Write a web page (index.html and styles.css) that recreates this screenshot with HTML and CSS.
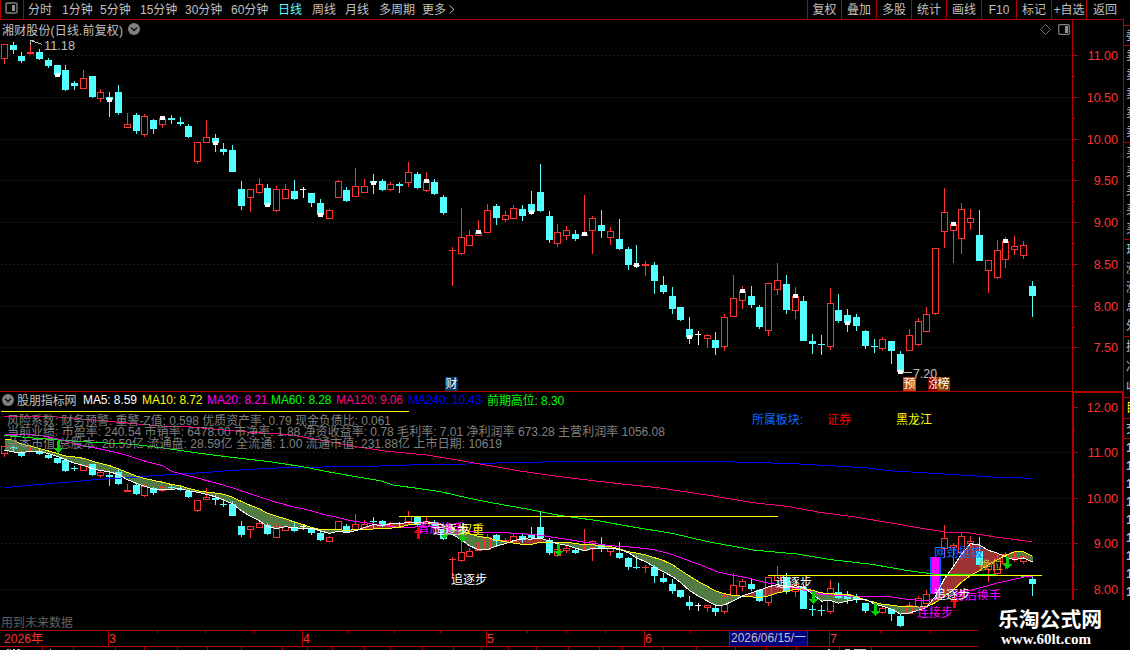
FILE: index.html
```
<!DOCTYPE html>
<html lang="zh-CN">
<head>
    <meta charset="UTF-8">
    <title>湘财股份 日线</title>
    <link rel="stylesheet" href="styles.css">
</head>
<body>
    <div class="toolbar">
        <div class="layout-btn">
            <svg width="13" height="12" viewBox="0 0 13 12"><rect x="1" y="1" width="11" height="10" rx="1" fill="none" stroke="#808080" stroke-width="1.4"/><rect x="7" y="3" width="3" height="6" fill="#909090"/></svg>
        </div>
        <div class="periods">
            <span>分时</span><span>1分钟</span><span>5分钟</span><span>15分钟</span><span>30分钟</span><span>60分钟</span><span class="active">日线</span><span>周线</span><span>月线</span><span>多周期</span>
            <span>更多 <svg width="6" height="9" viewBox="0 0 6 9"><path d="M0.5 0.5L5 4.5L0.5 8.5" fill="none" stroke="#c0c0c0"/></svg></span>
        </div>
        <div class="tools">
            <span>复权</span><span>叠加</span><span>多股</span><span>统计</span><span>画线</span><span>F10</span><span>标记</span><span>+自选</span><span>返回</span>
        </div>
    </div>

    <div class="main">
        <div class="charts">
            <div class="panel price-panel">
                <svg class="plot" id="pricePlot" width="1123" height="371" viewBox="0 20 1123 371"></svg>
                <div class="caption">
                    <span class="stock-name">湘财股份(日线.前复权)</span>
                    <svg width="12" height="12" viewBox="0 0 12 12"><circle cx="6" cy="6" r="6" fill="#808080"/><path d="M3 4.5L6 7.5L9 4.5" fill="none" stroke="#111" stroke-width="1.4"/></svg>
                    <div class="caption-icons">
                        <svg width="11" height="11" viewBox="0 0 11 11"><path d="M5.5 0.5L10.5 5.5L5.5 10.5L0.5 5.5Z" fill="none" stroke="#707070"/></svg>
                        <svg width="12" height="11" viewBox="0 0 12 11"><rect x="0.7" y="0.7" width="10.6" height="9.6" rx="1" fill="none" stroke="#808080" stroke-width="1.2"/><rect x="7" y="2" width="3" height="7" fill="#909090"/></svg>
                    </div>
                </div>
            </div>

            <div class="panel ind-panel">
                <svg class="plot" id="indPlot" width="1123" height="259" viewBox="0 391 1123 259"></svg>
                <div class="ind-caption">
                    <svg width="12" height="12" viewBox="0 0 12 12"><circle cx="6" cy="6" r="6" fill="#808080"/><path d="M3 4.5L6 7.5L9 4.5" fill="none" stroke="#111" stroke-width="1.4"/></svg>
                    <span class="gray">股朋指标网</span>
                    <span class="white">MA5: 8.59</span>
                    <span class="yellow">MA10: 8.72</span>
                    <span class="magenta">MA20: 8.21</span>
                    <span class="green">MA60: 8.28</span>
                    <span class="pink">MA120: 9.06</span>
                    <span class="blue">MA240: 10.43</span>
                    <span class="green">前期高位: 8.30</span>
                </div>
            </div>
        </div>

        <div class="strip">
            <div class="box box-1"><b>委</b></div>
            <div class="box box-5"><b>卖</b><b>卖</b><b>卖</b><b>卖</b><b>卖</b></div>
            <div class="box box-5"><b>买</b><b>买</b><b>买</b><b>买</b><b>买</b></div>
            <div class="box box-5"><b>现</b><b>涨</b><b>涨</b><b>总</b><b>外</b></div>
            <div class="box box-3"><b>换</b><b>净</b><b>收</b></div>
            <div class="box box-1 tab"><b>目</b></div>
            <div class="box box-1"><b>交</b></div>
            <div class="box ticks"><b>1</b><b>1</b><b>1</b><b>1</b><b>1</b><b>1</b><b>1</b><b>1</b><b>1</b></div>
        </div>
    </div>

    <div class="brand">
        <div class="brand-name">乐淘公式网</div>
        <div class="brand-url">www.60lt.com</div>
    </div>

    <script src="chart.js"></script>
</body>
</html>
```
FILE: styles.css
```
* {
    box-sizing: border-box;
}
body {
    margin: 0;
    width: 1130px;
    height: 650px;
    overflow: hidden;
    background: #000;
    color: #c0c0c0;
    font-family: "Liberation Sans", "Noto Sans CJK SC", sans-serif;
    font-size: 12px;
}
svg {
    display: block;
    flex: none;
}

/* top toolbar */
.toolbar {
    display: flex;
    height: 20px;
    width: 1124px;
    border-bottom: 1px solid #b00000;
    line-height: 20px;
    white-space: nowrap;
}
.layout-btn {
    width: 24px;
    padding: 2px 0 0 4px;
    border-left: 1px solid #b00000;
    border-right: 1px solid #b00000;
}
.periods {
    display: grid;
    grid-template-columns: 34px 38px 40px 45px 46px 47px 34px 33px 34px 43px 40px;
    padding-left: 4px;
}
.periods svg {
    display: inline-block;
}
.periods .active {
    color: #54ffff;
}
.tools {
    display: flex;
    margin-left: auto;
}
.tools span {
    width: 35px;
    border-left: 1px solid #b00000;
    text-align: center;
}
.tools span:first-child {
    width: 34px;
}
.tools span:last-child {
    width: 38px;
    padding-right: 1px;
}

.main {
    display: flex;
}
.charts {
    width: 1123px;
}
.panel {
    position: relative;
}
.price-panel {
    height: 371px;
}
.ind-panel {
    height: 259px;
}
.plot {
    position: absolute;
    left: 0;
    top: 0;
    shape-rendering: crispEdges;
}
.caption,
.ind-caption {
    position: relative;
    display: flex;
    align-items: center;
    white-space: nowrap;
}
.caption {
    height: 18px;
    padding: 0 53px 0 2px;
    gap: 5px;
}
.stock-name {
    width: 121px;
    letter-spacing: 0.15px;
}
.caption-icons {
    display: flex;
    gap: 7px;
    margin-left: auto;
}
.ind-caption {
    display: grid;
    grid-template-columns: 15px 66px 59px 65px 64px 65px 72px 79px 80px;
    height: 17px;
    padding-left: 2px;
}
.ind-caption span {
    letter-spacing: -0.1px;
}

.gray { color: #c0c0c0; }
.white { color: #fff; }
.yellow { color: #ff0; }
.magenta { color: #f0f; }
.green { color: #0f0; }
.pink { color: #ff0080; }
.blue { color: #00f; }

.axis-text {
    fill: #ff3232;
    font-size: 12.5px;
}
.badge-text {
    fill: #fff;
    font-size: 12px;
}

/* quote column cut off by the window edge */
.strip {
    width: 7px;
    height: 630px;
    padding-top: 5px;
    border-left: 1px solid #b00000;
    overflow: hidden;
}
.box {
    display: flex;
    flex-direction: column;
    justify-content: space-around;
    border-top: 1px solid #b00000;
    padding-left: 2px;
    overflow: hidden;
    line-height: 18px;
}
.box b {
    font-weight: normal;
}
.box-1 { height: 20px; }
.box-5 { height: 97px; }
.box-3 { height: 61px; }
.tab { color: #ff0; height: 21px; }
.ticks {
    height: 163px;
}
.ticks b {
    font-weight: bold;
    font-size: 13px;
}

.brand {
    position: absolute;
    left: 978px;
    top: 600px;
    width: 152px;
    height: 50px;
    padding: 7px 0 0 20px;
    background: #000;
    color: #fff;
    font-weight: bold;
    white-space: nowrap;
}
.brand-name {
    font-family: "Noto Sans CJK SC", sans-serif;
    font-size: 20.8px;
    line-height: 22px;
}
.brand-url {
    padding: 1px 0 0 3px;
    font-family: "Liberation Serif", serif;
    font-size: 15px;
    line-height: 18px;
}
```
FILE: chart.js
```
// r = up (hollow), c = down (filled), w = flat; then high, body top, body bottom, low, flag
const bars = [
    ['r',44,44,59,64],['c',42,45,50,54],['c',52,56,61,63],['r',43,52,54,55],['c',49,52,59,60],['c',58,60,66,68],
    ['c',65,65,75,77,73],['c',65,70,90,91],['c',81,83,86,90],['r',70,78,89,89],['c',76,76,97,98],['r',89,92,99,102],
    ['c',92,97,100,117,98],['c',85,92,113,115],['r',113,124,128,128],['c',113,115,131,134],['r',114,116,135,137],
    ['c',119,120,129,134],['r',116,118,125,128,116],['c',115,118,120,124],['c',117,122,124,126],['c',124,126,137,138],
    ['r',142,142,162,164],['r',120,137,143,143],['c',134,138,143,152,141],['c',143,149,152,155],['c',145,150,172,172],
    ['c',181,189,206,210],['r',189,189,198,212],['r',178,184,193,194],['c',184,188,205,207,203],['r',186,189,211,212],
    ['r',184,189,199,199],['c',180,191,199,200],['w',187,189,190,198],['c',193,193,203,207],['c',199,203,215,217,213],
    ['r',209,210,219,219],['r',180,181,198,198],['c',187,190,201,202],['r',168,186,197,197],['r',179,186,193,193],
    ['c',174,181,183,194,181],['c',179,181,190,191],['r',182,184,190,191],['c',182,184,186,193],['r',162,172,183,187],
    ['c',172,174,188,189],['r',172,181,191,192,179],['c',179,182,194,195],['c',195,197,213,215],['r',247,250,251,286],
    ['r',208,237,254,255],['r',230,235,246,246],['r',220,232,236,236,230],['r',204,210,233,233],['c',204,206,218,225],
    ['r',211,215,220,222],['r',205,208,219,219],['c',205,209,216,221],['c',191,204,212,215,210],['c',164,192,211,212],
    ['c',211,216,240,243],['r',224,232,244,247],['r',226,230,236,240],['c',230,234,239,241],['r',195,234,236,236,232],
    ['r',216,218,231,254],['c',210,225,231,238],['r',227,231,238,245],['c',219,239,249,250],['c',247,249,265,270],
    ['c',245,265,266,268,263],['r',261,264,266,276],['c',262,265,281,294],['c',276,285,292,294],['c',287,296,309,314],
    ['c',307,307,320,321],['c',317,329,337,344,335],['w',331,334,335,345],['r',334,335,339,348],['c',332,340,348,355],
    ['r',314,317,347,351],['r',275,298,317,317],['r',286,291,301,309,289],['c',286,296,305,308],['c',305,307,327,329],
    ['r',283,283,331,336],['r',263,280,290,295],['c',275,284,310,314],['r',287,296,311,319,294],['c',296,301,341,341],
    ['c',334,341,344,354],['c',335,344,345,355],['r',288,303,347,350],['c',294,310,321,323],['c',309,315,323,332,321],
    ['c',314,317,326,331],['c',330,331,346,349],['c',339,346,347,353],['r',337,339,349,351],['c',341,341,351,364],
    ['c',351,354,372,374,370],['r',329,335,351,351],['r',318,321,345,346],['r',307,314,332,332],['r',248,248,314,315],
    ['r',188,212,232,248],['r',221,224,231,263,222],['r',203,209,239,254],['r',209,218,223,230],['c',210,235,261,261],
    ['r',260,260,271,293],['r',240,250,278,279],['r',237,241,260,268,239],['r',236,246,250,255],['r',241,245,256,259],
    ['c',281,286,296,317]
];

const RED = '#ff3232', CYAN = '#54ffff', LINE = '#b00000';
const price = document.getElementById('pricePlot');
const ind = document.getElementById('indPlot');
const barX = i => Math.floor(4.3 + i * 8.786);
const toInd = y => 452.5 + (y - 55.5) * 0.547;

function add(svg, tag, attrs, text) {
    const el = document.createElementNS('http://www.w3.org/2000/svg', tag);
    for (const k in attrs) el.setAttribute(k, attrs[k]);
    if (text) el.textContent = text;
    svg.appendChild(el);
    return el;
}
function rect(svg, x, y, w, h, fill) {
    add(svg, 'rect', { x, y, width: w, height: h, fill });
}
function line(svg, pts, color) {
    add(svg, 'polyline', { points: pts.map(p => p.join(',')).join(' '), fill: 'none', stroke: color });
}
function label(svg, x, y, text, fill, width, size) {
    const a = { x, y, fill, 'font-size': size || 12 };
    if (width) { a.textLength = width; a.lengthAdjust = 'spacingAndGlyphs'; }
    add(svg, 'text', a, text);
}
function grid(svg, ys) {
    ys.forEach(y => add(svg, 'line', { x1: 1, x2: 1072, y1: y + 0.5, y2: y + 0.5, stroke: '#a00000', 'stroke-dasharray': '1 3' }));
}
function candle(svg, x, type, hi, top, bot, lo) {
    const color = type === 'r' ? RED : type === 'c' ? CYAN : '#fff';
    if (top > hi) rect(svg, x, hi, 1, top - hi, color);
    if (lo > bot) rect(svg, x, bot, 1, lo - bot, color);
    if (type === 'w') {
        rect(svg, x - 3, top, 6, 1, color);
        rect(svg, x, top, 1, 2, color);
    } else if (type === 'c' || bot - top < 3) {
        rect(svg, x - 3, top, 7, Math.max(1, bot - top), color);
    } else {
        add(svg, 'rect', { x: x - 2.5, y: top + 0.5, width: 6, height: bot - top - 1, fill: 'none', stroke: color });
    }
}

// ---- price chart ----
grid(price, [55, 97, 139, 180, 222, 264, 306, 347]);
bars.forEach((b, i) => {
    candle(price, barX(i), b[0], b[1], b[2], b[3], b[4]);
    if (b[5]) rect(price, barX(i) - 2, b[5], 5, 4, '#fff');
});
rect(price, 1072, 20, 1, 371, LINE);
[[55, '11.00'], [97, '10.50'], [139, '10.00'], [180, '9.50'], [222, '9.00'], [264, '8.50'], [306, '8.00'], [347, '7.50']].forEach(([y, t], i) => {
    rect(price, 1073, y, 5, 1, LINE);
    if (i < 7) rect(price, 1073, y + 21, 2, 1, LINE);
    add(price, 'text', { x: 1118, y: y + 5, 'text-anchor': 'end', class: 'axis-text' }, t);
});
line(price, [[30.5, 45], [30.5, 40.5], [34, 40.5]], '#c0c0c0');
line(price, [[31, 40.5], [42, 44.5]], '#c0c0c0');
label(price, 44, 50, '11.18', '#c0c0c0', 31, 12.5);
line(price, [[902, 372.5], [912, 372.5]], '#c0c0c0');
label(price, 913, 378, '7.20', '#c0c0c0', 24, 12.5);
[[445, '财', '#003866'], [903, '预', '#b84a10'], [928, '涨', '#800000'], [937, '榜', '#804000']].forEach(([x, t, bg]) => {
    rect(price, x, 377, 13, 14, bg);
    add(price, 'text', { x: x + 0.5, y: 388, class: 'badge-text' }, t);
});

// ---- indicator chart ----
grid(ind, [452, 498, 543, 589]);

const closes = bars.map(b => toInd(b[0] === 'c' ? b[3] : b[2]));
function ma(n, seed) {
    return closes.map((c, i) => {
        const y = i < n - 1 ? seed[i] : closes.slice(i - n + 1, i + 1).reduce((a, v) => a + v, 0) / n;
        return [barX(i) + 0.5, y];
    });
}
const ma5 = ma(5, [450, 452, 452.5, 451.5]);
const ma10 = ma(10, [439, 440.5, 444, 446, 448.5, 451, 453.5, 456, 457]);
const ma20 = ma(20, [434, 434, 434, 434.5, 435.5, 437, 439, 441, 443.5, 446, 447.5, 449, 451, 453, 455.5, 458.5, 461, 463.5, 465.5]);

// band between MA5 and MA10, split where they cross
for (let i = 1; i < bars.length; i++) {
    const [x0, a0] = ma5[i - 1], [x1, a1] = ma5[i], b0 = ma10[i - 1][1], b1 = ma10[i][1];
    const d0 = a0 - b0, d1 = a1 - b1;
    const fill = d => d > 0 ? '#527a43' : '#9c3232';
    const poly = (pts, d) => add(ind, 'polygon', { points: pts.join(' '), fill: fill(d) });
    if (d0 * d1 < 0) {
        const t = d0 / (d0 - d1), xc = x0 + (x1 - x0) * t, yc = a0 + (a1 - a0) * t;
        poly([x0, a0, xc, yc, x0, b0], d0);
        poly([x1, a1, xc, yc, x1, b1], d1);
    } else {
        poly([x0, a0, x1, a1, x1, b1, x0, b0], d0 + d1);
    }
}

bars.forEach((b, i) => {
    if (i === 106) return;
    const [hi, top, bot, lo] = b.slice(1, 5).map(y => Math.round(toInd(y)));
    candle(ind, barX(i), b[0], hi, top, bot, lo);
});
rect(ind, 930, 557, 11, 37, '#0060ff');
rect(ind, 932, 557, 7, 37, '#ff00ff');

line(ind, [[4,487.7],[33,485],[67,482.3],[100,479.3],[133,477.3],[167,474.7],[207,472.3],[233,470.3],[283,467.7],[340,466.7],[380,466],[420,464.7],[467,464],[518,462.3],[597,461.3],[693,461.3],[753,462.3],[807,464.3],[867,468],[893,471],[933,473.3],[993,477],[1032,478.3]], '#0000ff');
line(ind, [[4,416.5],[53,416.7],[97,420.3],[160,426],[187,426.7],[250,432.3],[287,434.3],[307,437.7],[333,442.3],[360,447.3],[387,451.3],[427,455],[467,461.7],[520,471],[560,476.7],[613,483],[660,488],[707,495],[753,502.7],[787,506.3],[820,512.3],[853,516.7],[887,522.3],[920,528],[947,532.3],[970,533],[997,537.3],[1032,541.7]], '#ff0080');
line(ind, [[4,435.5],[33,438],[67,440.7],[100,442.7],[133,444.3],[167,448.5],[200,453.3],[233,457.5],[267,461.3],[300,466.3],[333,472.7],[380,480.7],[393,485],[440,491.5],[470,498.5],[493,503],[527,509],[560,515.5],[600,521],[633,527],[673,533.5],[707,541.5],[740,547.5],[753,550],[797,554],[830,559.5],[873,564.5],[907,570.5],[933,574],[983,574.5],[1033,576.5]], '#00ff00');
line(ind, ma20, '#ff00ff');
line(ind, ma10, '#ffff00');
line(ind, ma5, '#ffffff');

rect(ind, 1, 411, 408, 1, '#ffff00');
rect(ind, 399, 516, 379, 1, '#ffff00');
rect(ind, 768, 575, 274, 1, '#ffff00');

// signal arrows
[[58, 441], [444, 527], [462, 530], [558, 544], [813, 592], [875, 604], [1007, 557]].forEach(([x, y]) => {
    add(ind, 'path', { d: `M${x - 1} ${y}h3v7h3l-4.5 5l-4.5 -5h3z`, fill: '#00d000' });
});
[[418, 527], [954, 596]].forEach(([x, y]) => {
    add(ind, 'path', { d: `M${x - 1} ${y + 12}h3v-6h3l-4.5 -6l-4.5 6h3z`, fill: '#ff0000' });
});

label(ind, 7, 425, '风险系数: 财务预警: 重警-Z值: 0.598 优质资产率: 0.79 现金负债比: 0.061', '#808080', 384);
label(ind, 7, 436, '当前业绩: 市盈率: 240.54 市销率: 6478.00 市净率: 1.88 净资收益率: 0.78 毛利率: 7.01 净利润率 673.28 主营利润率 1056.08', '#808080', 658);
label(ind, 7, 448, '总本市值 总股本: 28.59亿 流通盘: 28.59亿 全流通: 1.00 流通市值: 231.88亿 上市日期: 10619', '#808080', 495);
label(ind, 752, 424, '所属板块:', '#0a6cff', 51);
label(ind, 827, 424, '证券', '#ff0000', 24);
label(ind, 896, 424, '黑龙江', '#ffff00', 36);
label(ind, 418, 533, '背后换手', '#ff00ff', 46);
label(ind, 460, 534, '权重', '#ffff00', 24);
label(ind, 433, 534, '追逐步', '#ffffff', 36);
label(ind, 451, 584, '追逐步', '#ffffff', 36);
label(ind, 776, 587, '追逐步', '#ffffff', 36);
label(ind, 934, 557, '网劲挺拔', '#0a6cff', 49);
label(ind, 979, 570, '换位', '#c8b432', 24);
label(ind, 953, 600, '背后换手', '#ff00ff', 48);
label(ind, 934, 599, '追逐步', '#ffffff', 36);
label(ind, 917, 617, '连接步', '#ff00ff', 36);
label(ind, 1, 627, '用到未来数据', '#606060', 72);

// frame and value axis
rect(ind, 0, 391, 1073, 1, LINE);
rect(ind, 1072, 391, 51, 2, LINE);
rect(ind, 1072, 391, 2, 209, LINE);
rect(ind, 1122, 391, 1, 209, LINE);
[[407, '12.00'], [452, '11.00'], [498, '10.00'], [543, '9.00'], [589, '8.00']].forEach(([y, t], i) => {
    rect(ind, 1074, y, 4, 1, LINE);
    if (i < 4) rect(ind, 1074, y + 23, 1, 1, LINE);
    add(ind, 'text', { x: 1118, y: y + 5, 'text-anchor': 'end', class: 'axis-text' }, t);
});

// time axis
rect(ind, 0, 630, 978, 1, LINE);
rect(ind, 0, 646, 978, 1, LINE);
[108, 302, 486, 644, 829].forEach(x => rect(ind, x, 630, 1, 16, LINE));
[157, 205, 254, 348, 394, 440, 527, 566, 605, 690, 880, 930].forEach(x => rect(ind, x, 631, 1, 2, LINE));
[42, 73, 115, 144, 177, 207, 241, 282, 307, 332, 364, 390, 422, 453, 481, 508, 536, 568, 599, 622, 663, 696, 735, 766, 796, 839, 871].forEach(x => rect(ind, x, 647, 1, 3, LINE));
[[4, '2026年', 39], [109, '3'], [303, '4'], [487, '5'], [645, '6'], [830, '7']].forEach(([x, t, w]) => label(ind, x, 643, t, RED, w, 12.5));
rect(ind, 729, 631, 79, 15, LINE);
rect(ind, 730, 631, 77, 15, '#000080');
label(ind, 731, 642, '2026/06/15/一', '#c0c0c0', 75, 12.5);
[[7, 2], [10, 1], [13, 2], [17, 3], [50, 1], [828, 2], [845, 5], [854, 12]].forEach(([x, w]) => rect(ind, x, 649, w, 1, '#c0c0c0'));
```
